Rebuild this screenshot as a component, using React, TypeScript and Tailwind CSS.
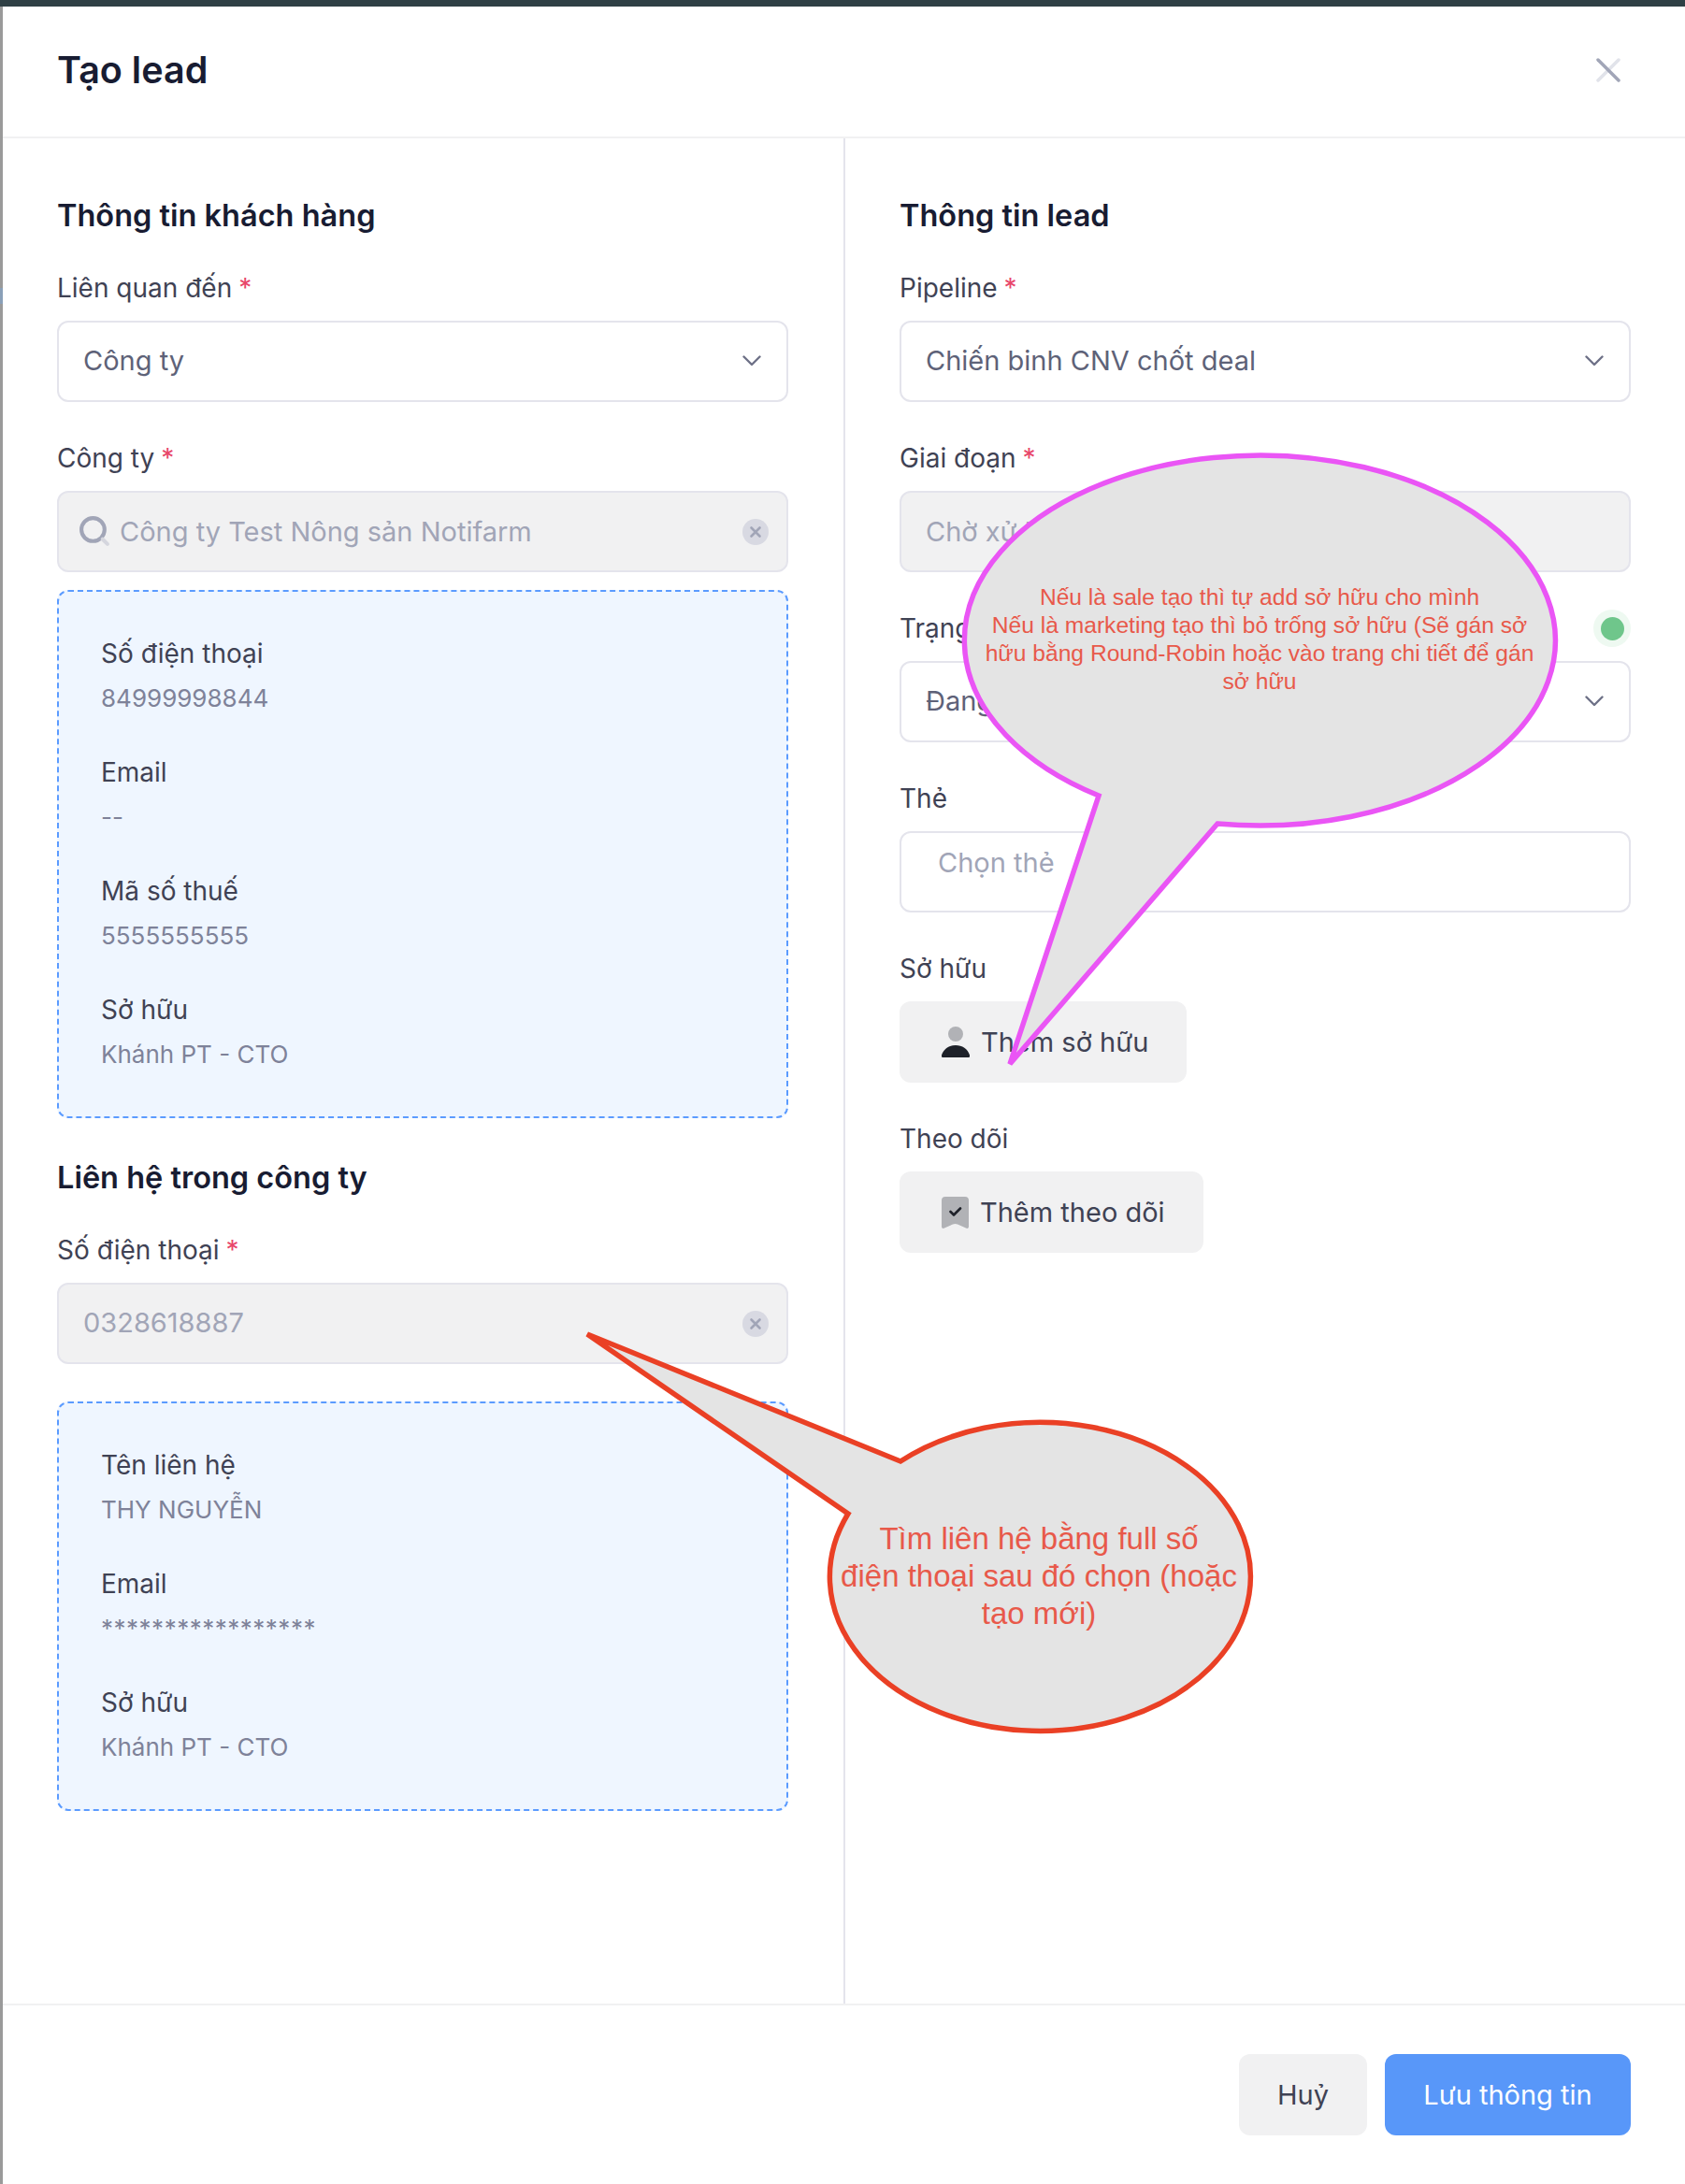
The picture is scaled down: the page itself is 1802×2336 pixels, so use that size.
import type { ReactNode } from 'react'

function Label({ children, required }: { children: ReactNode; required?: boolean }) {
  return (
    <div className="h-[36px] mb-[17px] text-[28px] leading-[36px] text-[#3f4254]">
      {children}
      {required && <span className="ml-[7px] text-[#e8476a]">*</span>}
    </div>
  )
}

function Clear() {
  return (
    <svg width="28" height="28" viewBox="0 0 28 28" className="shrink-0">
      <circle cx="14" cy="14" r="14" fill="#d8d9e2" />
      <path d="M9.5 9.5l9 9M18.5 9.5l-9 9" stroke="#a1a5b7" strokeWidth="2.6" strokeLinecap="round" />
    </svg>
  )
}

function Select({ value }: { value: string }) {
  return (
    <div className="h-[87px] flex items-center justify-between pl-[26px] pr-[27px] bg-white border-2 border-[#e4e4ec] rounded-[12px] text-[29px] text-[#5e6278]">
      <span className="-mt-[2px]">{value}</span>
      <svg width="20" height="12" viewBox="0 0 20 12" className="-mt-[2px]">
        <path d="M1.500 1.500L10 10l8.500-8.500" fill="none" stroke="#6e7187" strokeWidth="2.400" strokeLinecap="round" strokeLinejoin="round" />
      </svg>
    </div>
  )
}

function Disabled({ children }: { children: ReactNode }) {
  return (
    <div className="h-[87px] flex items-center justify-between pl-[26px] pr-[19px] bg-[#f1f1f2] border-2 border-[#e4e4ec] rounded-[12px] text-[29px] text-[#a1a5b7]">
      {children}
    </div>
  )
}

function InfoBox({ rows }: { rows: [string, ReactNode][] }) {
  return (
    <div className="mt-[19px] flex flex-col gap-[44px] px-[45px] pt-[48px] pb-[49px] bg-[#eff6ff] border-2 border-dashed border-[#5b9bff] rounded-[12px]">
      {rows.map(([label, value]) => (
        <div key={label} className="flex flex-col gap-[13px]">
          <div className="h-[36px] text-[28px] leading-[36px] text-[#3f4254]">{label}</div>
          <div className="h-[34px] text-[26px] leading-[34px] text-[#7e8299]">{value}</div>
        </div>
      ))}
    </div>
  )
}

function Heading({ children }: { children: ReactNode }) {
  return <h2 className="h-[44px] mb-[37px] text-[32.500px] leading-[44px] font-semibold text-[#181c32]">{children}</h2>
}

function GrayButton({ icon, children }: { icon: ReactNode; children: ReactNode }) {
  return (
    <div className="inline-flex h-[87px] items-center gap-[12px] pl-[45px] pr-[41px] bg-[#f1f1f2] rounded-[12px] text-[29px] text-[#3f4254]">
      {icon}
      <span>{children}</span>
    </div>
  )
}

export default function App() {
  return (
    <div className="relative w-[1802px] h-[2336px] overflow-hidden bg-white [font-family:Inter,sans-serif]">
      <div className="h-[7px] bg-[#2f4045]" />

      <div className="flex flex-col h-[2329px] border-l-[3px] border-[#9a9a9a]">
        {/* Header */}
        <div className="h-[141px] shrink-0 flex items-center justify-between pl-[58px] pr-[69px] border-b-2 border-[#f1f1f2]">
          <h1 className="text-[39.500px] font-semibold text-[#181c32] -mt-[2px]">Tạo lead</h1>
          <svg width="26" height="26" viewBox="0 0 26 26" className="-mt-[4px]">
            <path d="M24 2L2 24" stroke="#e1e3ea" strokeWidth="3.500" strokeLinecap="round" />
            <path d="M2 2l22 22" stroke="#a1a5b7" strokeWidth="3.500" strokeLinecap="round" />
          </svg>
        </div>

        {/* Body */}
        <div className="flex-1 flex min-h-0">
          <div className="w-[899px] shrink-0 pl-[58px] pr-[59px] pt-[61px]">
            <Heading>Thông tin khách hàng</Heading>
            <Label required>Liên quan đến</Label>
            <Select value="Công ty" />
            <div className="mt-[42px]">
              <Label required>Công ty</Label>
              <Disabled>
                <span className="flex items-center gap-[9px] -ml-[5px]">
                  <svg width="35" height="35" viewBox="0 0 34 34">
                    <circle cx="15" cy="15" r="12" fill="none" stroke="#a1a5b7" strokeWidth="4" />
                    <path d="M25 25l5 5" stroke="#d5d6de" strokeWidth="4" strokeLinecap="round" />
                  </svg>
                  Công ty Test Nông sản Notifarm
                </span>
                <Clear />
              </Disabled>
            </div>
            <InfoBox
              rows={[
                ['Số điện thoại', '84999998844'],
                ['Email', '--'],
                ['Mã số thuế', '5555555555'],
                ['Sở hữu', 'Khánh PT - CTO'],
              ]}
            />
            <div className="mt-[42px]">
              <Heading>Liên hệ trong công ty</Heading>
            </div>
            <Label required>Số điện thoại</Label>
            <Disabled>
              <span className="-mt-[2px]">0328618887</span>
              <Clear />
            </Disabled>
            <div className="h-[21px]" />
            <InfoBox
              rows={[
                ['Tên liên hệ', 'THY NGUYỄN'],
                ['Email', <span className="tracking-[0.5px]">*****************</span>],
                ['Sở hữu', 'Khánh PT - CTO'],
              ]}
            />
          </div>

          <div className="flex-1 border-l-2 border-[#e4e4ec] pl-[58px] pr-[58px] pt-[61px]">
            <Heading>Thông tin lead</Heading>
            <Label required>Pipeline</Label>
            <Select value="Chiến binh CNV chốt deal" />
            <div className="mt-[42px]">
              <Label required>Giai đoạn</Label>
              <Disabled>
                <span>Chờ xử lý</span>
              </Disabled>
            </div>
            <div className="mt-[42px]">
              <div className="h-[36px] mb-[17px] flex items-center justify-between text-[28px] text-[#3f4254]">
                <span>Trạng thái</span>
                <span className="w-[40px] h-[40px] flex items-center justify-center rounded-full bg-[#eef9f1]">
                  <span className="w-[25px] h-[25px] rounded-full bg-[#6fc68b]" />
                </span>
              </div>
              <Select value="Đang xử lý" />
            </div>
            <div className="mt-[42px]">
              <Label>Thẻ</Label>
              <div className="h-[87px] flex items-center pl-[39px] pb-[20px] bg-white border-2 border-[#e4e4ec] rounded-[12px] text-[29px] text-[#a1a5b7]">
                Chọn thẻ
              </div>
            </div>
            <div className="mt-[42px]">
              <Label>Sở hữu</Label>
              <GrayButton
                icon={
                  <svg width="30" height="33" viewBox="0 0 30 33">
                    <circle cx="15" cy="8" r="8" fill="#b1b2b6" />
                    <path d="M1 33a2 2 0 0 1-1-2.500C2 24 8 20 15 20s13 4 15 10.500a2 2 0 0 1-1 2.500z" fill="#1e2129" />
                  </svg>
                }
              >
                Thêm sở hữu
              </GrayButton>
            </div>
            <div className="mt-[42px]">
              <Label>Theo dõi</Label>
              <GrayButton
                icon={
                  <svg width="29" height="34" viewBox="0 0 29 34">
                    <path d="M4 0h21a4 4 0 0 1 4 4v28c0 2-2 2.500-3 1.500l-9-4a6 6 0 0 0-5 0l-9 4c-1 1-3 .5-3-1.500V4a4 4 0 0 1 4-4z" fill="#b1b2b6" />
                    <path d="M9.500 16l3.500 3.500 7-7" fill="none" stroke="#1e2129" strokeWidth="2.600" strokeLinecap="round" strokeLinejoin="round" />
                  </svg>
                }
              >
                Thêm theo dõi
              </GrayButton>
            </div>
          </div>
        </div>

        {/* Footer */}
        <div className="h-[193px] shrink-0 flex justify-end gap-[19px] pt-[52px] pr-[58px] border-t-2 border-[#f1f1f2]">
          <div className="h-[87px] w-[137px] flex items-center justify-center bg-[#f1f1f2] rounded-[12px] text-[29px] text-[#3f4254]">Huỷ</div>
          <div className="h-[87px] w-[263px] flex items-center justify-center bg-[#5897f9] rounded-[12px] text-[29px] text-white">Lưu thông tin</div>
        </div>
      </div>

      {/* Sliver of the page behind the modal */}
      <div className="absolute left-0 top-[308px] w-[3px] h-[17px] bg-[#8aa0b8]" />

      {/* Annotation callouts drawn on top of the screenshot */}
      <svg width="1802" height="2336" className="absolute inset-0 pointer-events-none">
        <path d="M1302 881A316 198 0 1 0 1175 851L1080 1138Z" fill="#e4e4e4" stroke="#ea55f5" strokeWidth="5.500" />
        <path d="M963 1563A225 165 0 1 1 907 1619L628 1427Z" fill="#e4e4e4" stroke="#ea4025" strokeWidth="5.500" />
      </svg>
      <div className="absolute left-[1037px] top-[624px] w-[620px] text-center text-[24.600px] leading-[30px] text-[#e8594a] [font-family:'Liberation_Sans',sans-serif]">
        Nếu là sale tạo thì tự add sở hữu cho mình
        <br />
        Nếu là marketing tạo thì bỏ trống sở hữu (Sẽ gán sở
        <br />
        hữu bằng Round-Robin hoặc vào trang chi tiết để gán
        <br />
        sở hữu
      </div>
      <div className="absolute left-[891px] top-[1626px] w-[440px] text-center text-[33px] leading-[40px] text-[#e8594a] [font-family:'Liberation_Sans',sans-serif]">
        Tìm liên hệ bằng full số
        <br />
        điện thoại sau đó chọn (hoặc
        <br />
        tạo mới)
      </div>
    </div>
  )
}
